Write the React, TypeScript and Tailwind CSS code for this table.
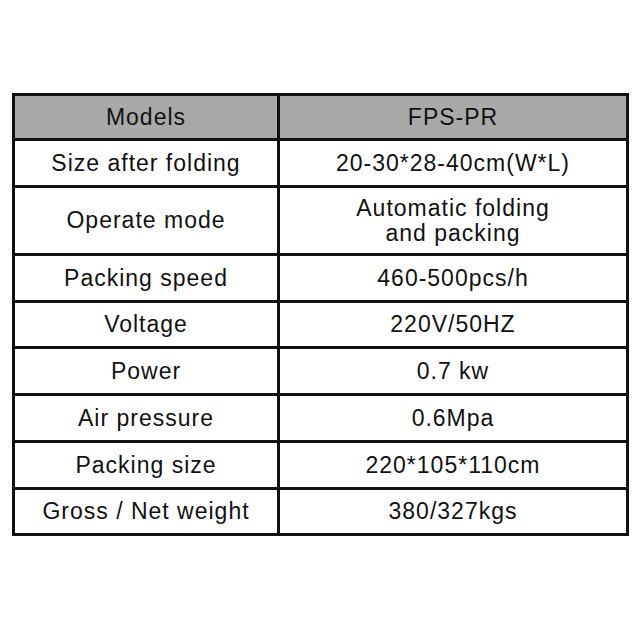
const ROWS: { label: string; value: React.ReactNode; h: string }[] = [
  { label: "Size after folding", value: "20-30*28-40cm(W*L)", h: "h-[47px]" },
  {
    label: "Operate mode",
    value: (
      <>
        Automatic folding
        <br />
        and packing
      </>
    ),
    h: "h-[68px]",
  },
  { label: "Packing speed", value: "460-500pcs/h", h: "h-[47px]" },
  { label: "Voltage", value: "220V/50HZ", h: "h-[46px]" },
  { label: "Power", value: "0.7 kw", h: "h-[47px]" },
  { label: "Air pressure", value: "0.6Mpa", h: "h-[47px]" },
  { label: "Packing size", value: "220*105*110cm", h: "h-[47px]" },
  { label: "Gross / Net weight", value: "380/327kgs", h: "h-[43px]" },
];

export default function App() {
  return (
    <div
      className="w-[640px] h-[640px] bg-white pt-[93px] pl-[12px] text-[#111] text-[23px] leading-[25px] tracking-[1px]"
      style={{ fontFamily: '"Liberation Sans", Arial, sans-serif' }}
    >
      <div className="w-[617px] border-[3px] border-[#111] flex flex-col">
        <div className="flex h-[45px] bg-[#a9a9a9] border-b-[3px] border-[#111]">
          <div className="w-[265px] border-r-[3px] border-[#111] flex items-center justify-center">
            Models
          </div>
          <div className="flex-1 flex items-center justify-center">FPS-PR</div>
        </div>
        {ROWS.map((r, i) => (
          <div
            key={r.label}
            className={`flex ${r.h} ${i < ROWS.length - 1 ? "border-b-[3px] border-[#111]" : ""}`}
          >
            <div className="w-[265px] border-r-[3px] border-[#111] flex items-center justify-center">
              {r.label}
            </div>
            <div className="flex-1 flex items-center justify-center text-center">{r.value}</div>
          </div>
        ))}
      </div>
    </div>
  );
}
